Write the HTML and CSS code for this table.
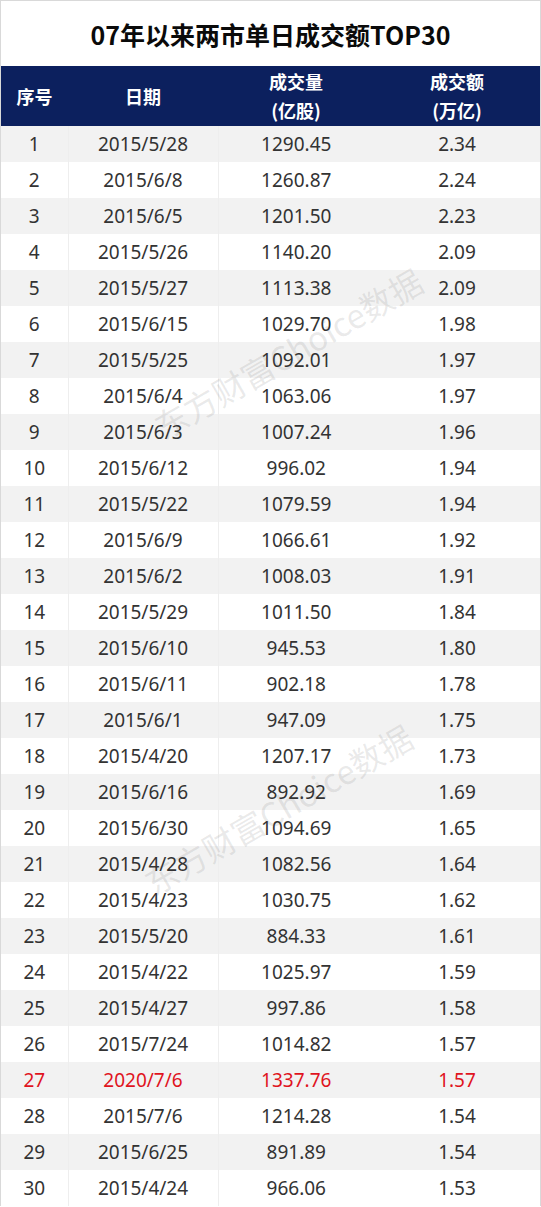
FILE: index.html
```html
<!DOCTYPE html>
<html lang="zh-CN">
<head>
<meta charset="utf-8">
<title>07年以来两市单日成交额TOP30</title>
<link rel="stylesheet" href="styles.css">
</head>
<body>
<div class="sheet">
  <div class="title">07年以来两市单日成交额TOP30</div>
  <table class="grid">
    <colgroup>
      <col class="c1"><col class="c2"><col class="c3"><col class="c4">
    </colgroup>
    <thead>
      <tr>
        <th>序号</th>
        <th>日期</th>
        <th>成交量<br>(亿股)</th>
        <th>成交额<br>(万亿)</th>
      </tr>
    </thead>
    <tbody>
      <tr><td>1</td><td>2015/5/28</td><td>1290.45</td><td>2.34</td></tr>
      <tr><td>2</td><td>2015/6/8</td><td>1260.87</td><td>2.24</td></tr>
      <tr><td>3</td><td>2015/6/5</td><td>1201.50</td><td>2.23</td></tr>
      <tr><td>4</td><td>2015/5/26</td><td>1140.20</td><td>2.09</td></tr>
      <tr><td>5</td><td>2015/5/27</td><td>1113.38</td><td>2.09</td></tr>
      <tr><td>6</td><td>2015/6/15</td><td>1029.70</td><td>1.98</td></tr>
      <tr><td>7</td><td>2015/5/25</td><td>1092.01</td><td>1.97</td></tr>
      <tr><td>8</td><td>2015/6/4</td><td>1063.06</td><td>1.97</td></tr>
      <tr><td>9</td><td>2015/6/3</td><td>1007.24</td><td>1.96</td></tr>
      <tr><td>10</td><td>2015/6/12</td><td>996.02</td><td>1.94</td></tr>
      <tr><td>11</td><td>2015/5/22</td><td>1079.59</td><td>1.94</td></tr>
      <tr><td>12</td><td>2015/6/9</td><td>1066.61</td><td>1.92</td></tr>
      <tr><td>13</td><td>2015/6/2</td><td>1008.03</td><td>1.91</td></tr>
      <tr><td>14</td><td>2015/5/29</td><td>1011.50</td><td>1.84</td></tr>
      <tr><td>15</td><td>2015/6/10</td><td>945.53</td><td>1.80</td></tr>
      <tr><td>16</td><td>2015/6/11</td><td>902.18</td><td>1.78</td></tr>
      <tr><td>17</td><td>2015/6/1</td><td>947.09</td><td>1.75</td></tr>
      <tr><td>18</td><td>2015/4/20</td><td>1207.17</td><td>1.73</td></tr>
      <tr><td>19</td><td>2015/6/16</td><td>892.92</td><td>1.69</td></tr>
      <tr><td>20</td><td>2015/6/30</td><td>1094.69</td><td>1.65</td></tr>
      <tr><td>21</td><td>2015/4/28</td><td>1082.56</td><td>1.64</td></tr>
      <tr><td>22</td><td>2015/4/23</td><td>1030.75</td><td>1.62</td></tr>
      <tr><td>23</td><td>2015/5/20</td><td>884.33</td><td>1.61</td></tr>
      <tr><td>24</td><td>2015/4/22</td><td>1025.97</td><td>1.59</td></tr>
      <tr><td>25</td><td>2015/4/27</td><td>997.86</td><td>1.58</td></tr>
      <tr><td>26</td><td>2015/7/24</td><td>1014.82</td><td>1.57</td></tr>
      <tr class="hl"><td>27</td><td>2020/7/6</td><td>1337.76</td><td>1.57</td></tr>
      <tr><td>28</td><td>2015/7/6</td><td>1214.28</td><td>1.54</td></tr>
      <tr><td>29</td><td>2015/6/25</td><td>891.89</td><td>1.54</td></tr>
      <tr><td>30</td><td>2015/4/24</td><td>966.06</td><td>1.53</td></tr>
    </tbody>
  </table>
  <div class="watermark wm-a">东方财富Choice数据</div>
  <div class="watermark wm-b">东方财富Choice数据</div>
</div>
</body>
</html>
```
FILE: styles.css
```css
html, body {
  margin: 0;
  padding: 0;
  background: #ffffff;
}

.sheet {
  position: relative;
  box-sizing: border-box;
  width: 541px;
  border: 1px solid #d9d9d9;
  border-bottom: none;
  background: #ffffff;
  overflow: hidden;
}

.title {
  height: 65px;
  line-height: 67px;
  text-align: center;
  font-family: "Noto Sans CJK SC", "Noto Sans", sans-serif;
  font-weight: 700;
  font-size: 25px;
  color: #0a0a0a;
}

.grid {
  width: 539px;
  table-layout: fixed;
  border-collapse: collapse;
  border-spacing: 0;
}

.c1 { width: 67px; }
.c2 { width: 150px; }
.c3 { width: 156px; }
.c4 { width: 166px; }

.grid th {
  height: 60px;
  padding: 0;
  background: #0c205e;
  color: #ffffff;
  font-family: "Noto Sans CJK SC", "Noto Sans", sans-serif;
  font-weight: 700;
  font-size: 18px;
  line-height: 29px;
  text-align: center;
  vertical-align: middle;
}

.grid td {
  height: 36px;
  padding: 0;
  text-align: center;
  vertical-align: middle;
  font-family: "Noto Sans", "Noto Sans CJK SC", sans-serif;
  font-size: 19px;
  color: #333333;
}

.grid td:nth-child(1),
.grid td:nth-child(2) {
  border-right: 1px solid #eeeeee;
}

.grid tbody tr:nth-child(odd) td {
  background: #f2f2f2;
}

.grid tr.hl td {
  color: #e0141e;
}

.watermark {
  position: absolute;
  white-space: nowrap;
  font-family: "Noto Sans CJK SC", "Noto Sans", sans-serif;
  font-size: 33px;
  color: rgba(90, 90, 90, 0.13);
  transform: translate(-50%, -50%) rotate(-30deg);
  pointer-events: none;
}

.wm-a { left: 287px; top: 352px; }
.wm-b { left: 277px; top: 808px; }
```
